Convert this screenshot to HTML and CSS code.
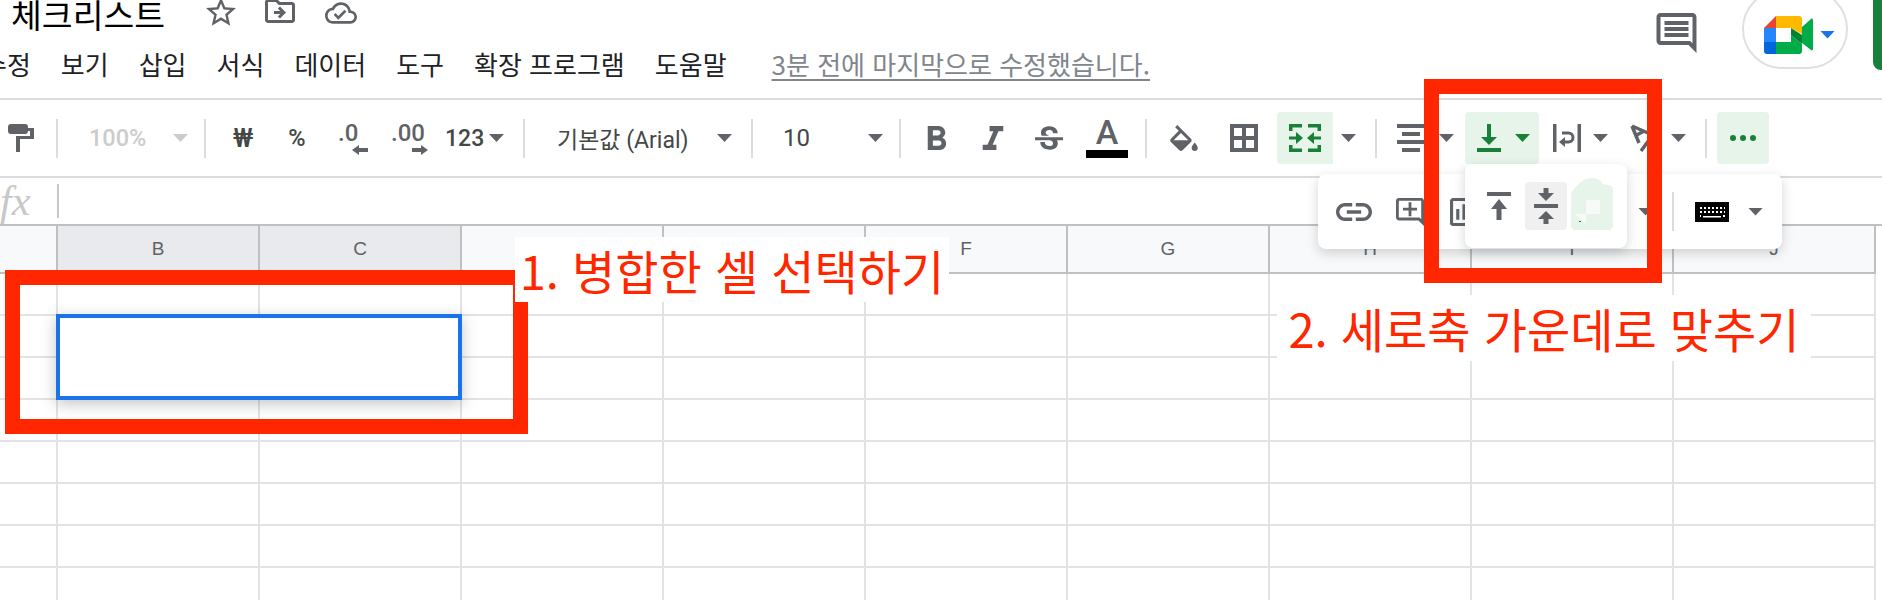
FILE: index.html
```html
<!DOCTYPE html>
<html lang="ko">
<head>
<meta charset="UTF-8">
<title>체크리스트</title>
<link rel="stylesheet" href="styles.css">
</head>
<body>

<!-- title and menu -->
<header class="top">
    <div class="top-left">
        <div class="title-row">
            <h1 class="doc-title">체크리스트</h1>
            <svg class="ico star" viewBox="2 2 20 19"><path d="M22 9.24l-7.19-.62L12 2 9.19 8.63 2 9.24l5.46 4.73L5.82 21 12 17.27 18.18 21l-1.63-7.03L22 9.24zM12 15.4l-3.76 2.27 1-4.28-3.32-2.88 4.38-.38L12 6.1l1.71 4.04 4.38.38-3.32 2.88 1 4.28L12 15.4z"/></svg>
            <svg class="ico move" viewBox="2 4 20 16"><path d="M20 6h-8l-2-2H4c-1.1 0-1.99.9-1.99 2L2 18c0 1.1.9 2 2 2h16c1.1 0 2-.9 2-2V8c0-1.1-.9-2-2-2zm0 12H4V6h5.17l2 2H20v10zM12.16 12H8v2h4.16l-1.59 1.59L11.99 17 16 13l-4.01-4-1.42 1.41z"/></svg>
            <svg class="ico cloud" viewBox="0 4 24 16"><path d="M19.35 10.04C18.67 6.59 15.64 4 12 4 9.11 4 6.6 5.64 5.35 8.04 2.34 8.36 0 10.91 0 14c0 3.31 2.69 6 6 6h13c2.76 0 5-2.24 5-5 0-2.64-2.05-4.78-4.65-4.96zM19 18H6c-2.21 0-4-1.79-4-4 0-2.05 1.53-3.76 3.56-3.97l1.07-.11.5-.95C8.08 7.14 9.94 6 12 6c2.62 0 4.88 1.86 5.39 4.43l.3 1.5 1.53.11c1.56.1 2.78 1.41 2.78 2.96 0 1.65-1.35 3-3 3zm-9-3.82l-2.09-2.09L6.5 13.5 10 17l6.01-6.01-1.41-1.41z"/></svg>
        </div>
        <nav class="menu">
            <span>수정</span>
            <span>보기</span>
            <span>삽입</span>
            <span>서식</span>
            <span>데이터</span>
            <span>도구</span>
            <span>확장 프로그램</span>
            <span>도움말</span>
            <span class="last-edit">3분 전에 마지막으로 수정했습니다.</span>
        </nav>
    </div>
    <div class="top-right">
        <svg class="ico comments" viewBox="2 2 20 20"><path d="M21.99 4c0-1.1-.89-2-1.99-2H4c-1.1 0-2 .9-2 2v12c0 1.1.9 2 2 2h14l4 4-.01-18zM20 4v13.17L18.83 16H4V4h16zM6 12h12v2H6zm0-3h12v2H6zm0-3h12v2H6z"/></svg>
        <div class="meet-pill">
            <svg class="meet-logo" viewBox="0 0 49 38">
                <path fill="#ea4335" d="M0 12L12 0v12z"/>
                <path fill="#ffba00" d="M12 0h23c2 0 3 1 3 3v15l-11-6V12H12z"/>
                <path fill="#2684fc" d="M0 12h12v14H0z"/>
                <path fill="#0066da" d="M0 26h12v12H3c-2 0-3-1-3-3z"/>
                <path fill="#00ac47" d="M12 26h15v-7l11 9v7c0 2-1 3-3 3H12z"/>
                <path fill="#00832d" d="M27 12l11 7v9l-11-9z"/>
                <path fill="#00ac47" d="M38 11l9-8c1-1 2 0 2 1v29c0 1-1 2-2 1l-9-7z"/>
            </svg>
            <span class="caret caret-blue"></span>
        </div>
        <div class="share-edge"></div>
    </div>
</header>

<!-- main toolbar -->
<div class="toolbar">
    <svg class="ico ml-8 w26" viewBox="0 0 26 28"><path d="M0 3a3 3 0 0 1 3-3h14a3 3 0 0 1 3 3v4a3 3 0 0 1-3 3H3a3 3 0 0 1-3-3zM20 4h6v11H12v13H8V12h14V7h-2z"/></svg>
    <span class="sep ml-22"></span>
    <span class="tb-text zoom-box ml-31">100%</span>
    <span class="caret caret-off ml-24"></span>
    <span class="sep ml-16"></span>
    <span class="tb-text tb-bold won ml-27">₩</span>
    <span class="tb-text tb-bold pct ml-35">%</span>
    <span class="decimal dec-less ml-32"><span>.0</span>
        <svg class="ico dec-arrow" viewBox="0 0 16 10"><path d="M16 3H7V0L0 5l7 5V7h9z"/></svg>
    </span>
    <span class="decimal dec-more ml-23"><span>.00</span>
        <svg class="ico dec-arrow" viewBox="0 0 16 10"><path d="M0 3h9V0l7 5-7 5V7H0z"/></svg>
    </span>
    <span class="tb-text tb-bold num-fmt ml-17">123</span>
    <span class="caret ml-5"></span>
    <span class="sep ml-19"></span>
    <span class="tb-text font-name ml-32">기본값 (Arial)</span>
    <span class="caret ml-27"></span>
    <span class="sep ml-19"></span>
    <span class="tb-text font-size ml-30">10</span>
    <span class="caret ml-58"></span>
    <span class="sep ml-16"></span>
    <svg class="ico ml-26 glyph-b" viewBox="7 4 10.800 14"><path d="M15.600 10.790c.97-.67 1.650-1.770 1.650-2.790 0-2.260-1.750-4-4-4H7v14h7.040c2.090 0 3.710-1.700 3.710-3.790 0-1.520-.86-2.820-2.150-3.420zM10 6.500h3c.83 0 1.500.67 1.500 1.500s-.67 1.500-1.500 1.500h-3v-3zm3.500 9H10v-3h3.500c.83 0 1.500.67 1.500 1.500s-.67 1.500-1.500 1.500z"/></svg>
    <svg class="ico ml-34 glyph-i" viewBox="6 4 12 14"><path d="M10 4v3h2.210l-3.420 8H6v3h8v-3h-2.210l3.420-8H18V4z"/></svg>
    <svg class="ico ml-30 glyph-s" viewBox="3 3 18 15"><path d="M6.850 7.080C6.850 4.370 9.450 3 12.240 3c1.640 0 3 .49 3.900 1.280.77.65 1.460 1.730 1.460 3.240h-3.010c0-.31-.05-.59-.15-.85-.29-.86-1.200-1.280-2.250-1.280-1.860 0-2.340 1.020-2.340 1.700 0 .48.25.88.74 1.210.38.25.77.48 1.410.7H7.390c-.21-.34-.54-.89-.54-1.920zM21 12v-2H3v2h9.620c1.150.45 1.960.75 1.960 1.970 0 1-.81 1.670-2.280 1.670-1.540 0-2.930-.54-2.930-2.510H6.400c0 .55.08 1.130.24 1.580.81 2.290 3.290 3.300 5.670 3.300 2.270 0 5.300-.89 5.300-4.050 0-.3-.01-1.160-.48-1.940H21V12z"/></svg>
    <span class="text-color ml-23"><span class="text-color-a">A</span><span class="text-color-bar"></span></span>
    <span class="sep ml-17"></span>
    <svg class="ico ml-23 bucket" viewBox="3 0 18 17"><path d="M16.560 8.940L7.620 0 6.210 1.410l2.380 2.380-5.150 5.150c-.59.59-.59 1.540 0 2.120l5.500 5.500c.29.29.68.44 1.060.44s.77-.15 1.060-.44l5.500-5.500c.59-.58.59-1.530 0-2.120zM5.210 10L10 5.210 14.790 10H5.210zM19 11.500s-2 2.170-2 3.500c0 1.100.9 2 2 2s2-.9 2-2c0-1.330-2-3.500-2-3.500z"/></svg>
    <svg class="ico ml-32 borders" viewBox="0 0 28 28"><path fill-rule="evenodd" d="M0 0h28v28H0zM4 4v8h8V4zM16 4v8h8V4zM4 16v8h8v-8zM16 16v8h8v-8z"/></svg>
    <span class="tb-on merge-btn ml-19">
        <svg class="ico-on merge-ico" viewBox="0 0 32 28"><path d="M0 0h13v3.500H3.500V7H0zM19 0h13v7h-3.500V3.500H19zM0 21h3.500v3.500H13V28H0zM28.500 21H32v7H19v-3.500h9.500zM0 12.500h7V8l7 6-7 6v-4.500H0zM32 12.500h-7V8l-7 6 7 6v-4.500h7z"/></svg>
    </span>
    <span class="caret ml-8"></span>
    <span class="sep ml-19"></span>
    <svg class="ico ml-20 w28" viewBox="0 0 28 28"><path d="M0 0h28v4H0zM5 8h18v4H5zM0 16h28v4H0zM5 24h18v4H5z"/></svg>
    <span class="caret ml-14"></span>
    <span class="tb-on valign-btn ml-11">
        <svg class="ico-on w24" viewBox="0 0 24 28"><path d="M10 0h4v13h6l-8 8-8-8h6zM0 24h24v4H0z"/></svg>
        <span class="caret caret-green"></span>
    </span>
    <svg class="ico ml-14 w28" viewBox="0 0 28 28"><path d="M0 0h3.500v28H0zM24.500 0H28v28h-3.500zM6 18l6-5v3.500h3.500a3 3 0 0 0 0-6H9V7.500h6.500a6 6 0 0 1 0 12H12V23z"/></svg>
    <span class="caret ml-12"></span>
    <svg class="ico-line ml-22 rotate" viewBox="0 0 19 28"><path d="M2 2l16 7M2 2l7 17M5 12l9-5M11 27l8-11"/></svg>
    <span class="caret ml-22"></span>
    <span class="sep ml-19"></span>
    <span class="tb-on more-btn ml-10">
        <svg class="ico-on more-ico" viewBox="0 0 26 6"><circle cx="3" cy="3" r="3"/><circle cx="13" cy="3" r="3"/><circle cx="23" cy="3" r="3"/></svg>
    </span>
</div>

<div class="formula-bar">
    <span class="fx">fx</span>
    <span class="fx-sep"></span>
</div>

<!-- sheet -->
<table class="sheet">
    <colgroup>
        <col class="col-head"><col class="col"><col class="col"><col class="col"><col class="col"><col class="col"><col class="col"><col class="col"><col class="col"><col class="col">
    </colgroup>
    <thead>
        <tr>
            <th></th>
            <th class="picked">B</th>
            <th class="picked">C</th>
            <th>D</th>
            <th>E</th>
            <th>F</th>
            <th>G</th>
            <th>H</th>
            <th>I</th>
            <th>J</th>
        </tr>
    </thead>
    <tbody>
        <tr><td></td><td></td><td></td><td></td><td></td><td></td><td></td><td></td><td></td><td></td></tr>
        <tr><td></td><td></td><td></td><td></td><td></td><td></td><td></td><td></td><td></td><td></td></tr>
        <tr><td></td><td></td><td></td><td></td><td></td><td></td><td></td><td></td><td></td><td></td></tr>
        <tr><td></td><td></td><td></td><td></td><td></td><td></td><td></td><td></td><td></td><td></td></tr>
        <tr><td></td><td></td><td></td><td></td><td></td><td></td><td></td><td></td><td></td><td></td></tr>
        <tr><td></td><td></td><td></td><td></td><td></td><td></td><td></td><td></td><td></td><td></td></tr>
        <tr><td></td><td></td><td></td><td></td><td></td><td></td><td></td><td></td><td></td><td></td></tr>
        <tr><td></td><td></td><td></td><td></td><td></td><td></td><td></td><td></td><td></td><td></td></tr>
    </tbody>
</table>

<div class="selected-cell"></div>

<!-- overflow toolbar opened from the "more" button -->
<div class="float-bar">
    <svg class="ico ml-18 link-ico" viewBox="2 7 20 10"><path d="M3.900 12c0-1.710 1.390-3.100 3.100-3.100h4V7H7c-2.760 0-5 2.240-5 5s2.240 5 5 5h4v-1.900H7c-1.710 0-3.100-1.390-3.100-3.100zM8 13h8v-2H8v2zm9-6h-4v1.900h4c1.710 0 3.100 1.390 3.100 3.100s-1.390 3.100-3.100 3.100h-4V17h4c2.760 0 5-2.240 5-5s-2.240-5-5-5z"/></svg>
    <svg class="ico ml-24 w28" viewBox="2 2 20 20"><path d="M22 4c0-1.100-.9-2-2-2H4c-1.100 0-2 .9-2 2v12c0 1.100.9 2 2 2h14l4 4V4zm-2 13.170L18.830 16H4V4h16v13.170zM13 5h-2v4H7v2h4v4h2v-4h4V9h-4z"/></svg>
    <svg class="ico ml-26 w28" viewBox="3 3 18 18"><path d="M19 3H5c-1.100 0-2 .9-2 2v14c0 1.100.9 2 2 2h14c1.100 0 2-.9 2-2V5c0-1.100-.9-2-2-2zm0 16H5V5h14v14zM7 10h2v7H7zm4-3h2v10h-2zm4 6h2v4h-2z"/></svg>
    <span class="caret ml-160"></span>
    <span class="sep ml-19"></span>
    <svg class="keyboard ml-21" viewBox="0 0 34 20">
        <rect width="34" height="20"/>
        <path fill="#fff" d="M5 5h2v2H5zM9 5h2v2H9zM13 5h2v2h-2zM17 5h2v2h-2zM21 5h2v2h-2zM25 5h2v2h-2zM29 5h1v2h-1zM5 9h2v2H5zM9 9h2v2H9zM13 9h2v2h-2zM17 9h2v2h-2zM21 9h2v2h-2zM25 9h2v2h-2zM29 9h1v2h-1zM5 13h1v2H5zM8 14h18v1.500H8zM28 13h2v2h-2z"/>
    </svg>
    <span class="caret ml-19"></span>
</div>

<div class="align-pop">
    <svg class="ico w24" viewBox="0 0 24 28"><path d="M0 0h24v4H0zM12 7l8 10h-5.500v11h-5V17H4z"/></svg>
    <span class="align-btn">
        <svg class="ico center-ico" viewBox="0 0 24 36"><path d="M9.500 0h5v5H20l-8 8-8-8h5.500zM0 16h24v4H0zM12 23l8 8h-5.500v5h-5v-5H4z"/></svg>
    </span>
    <svg class="align-blob" viewBox="0 0 42 52">
        <path fill="#e6f4ea" d="M0 14l10-10c8-6 18-5 22 2l5 1c3 0 5 2 5 5v35c0 3-2 5-5 5H5c-3 0-5-2-5-5z"/>
        <path fill="#f6fbf8" d="M15 22h14v14H15zM4 36h11v10z"/>
        <path fill="#188038" d="M8 43h2v1H8z"/>
    </svg>
</div>

<!-- red annotations drawn over the screenshot -->
<div class="mark mark-cell"></div>
<div class="mark mark-tool"></div>
<div class="note note-cell">1. 병합한 셀 선택하기</div>
<div class="note note-tool">2. 세로축 가운데로 맞추기</div>

</body>
</html>
```

FILE: styles.css
```css
body {
    font-family: "Noto Sans CJK KR", "Noto Sans", sans-serif;
    margin: 0;
    padding: 0;
    width: 1882px;
    height: 600px;
    overflow: hidden;
    position: relative;
    background-color: #fff;
    color: #202124;
}

.ico { fill: #5f6368; flex: none; display: block; }
.ico-on { fill: #188038; flex: none; display: block; }
.ico-line { fill: none; stroke: #5f6368; stroke-width: 3.5; flex: none; display: block; }
.w24 { width: 24px; height: 28px; }
.w26 { width: 26px; height: 28px; }
.w28 { width: 28px; height: 28px; }

.ml-5 { margin-left: 5px; }
.ml-8 { margin-left: 8px; }
.ml-10 { margin-left: 10px; }
.ml-11 { margin-left: 11px; }
.ml-12 { margin-left: 12px; }
.ml-14 { margin-left: 14px; }
.ml-16 { margin-left: 16px; }
.ml-17 { margin-left: 17px; }
.ml-18 { margin-left: 18px; }
.ml-19 { margin-left: 19px; }
.ml-20 { margin-left: 20px; }
.ml-21 { margin-left: 21px; }
.ml-22 { margin-left: 22px; }
.ml-23 { margin-left: 23px; }
.ml-24 { margin-left: 24px; }
.ml-26 { margin-left: 26px; }
.ml-27 { margin-left: 27px; }
.ml-30 { margin-left: 30px; }
.ml-31 { margin-left: 31px; }
.ml-32 { margin-left: 32px; }
.ml-34 { margin-left: 34px; }
.ml-35 { margin-left: 35px; }
.ml-58 { margin-left: 58px; }
.ml-160 { margin-left: 160px; }

.caret {
    flex: none;
    width: 15px;
    height: 8px;
    background: #5f6368;
    clip-path: polygon(0 0, 100% 0, 50% 100%);
}

.caret-off { background: #ccc; }
.caret-green { background: #188038; margin-left: 14px; }
.caret-blue { background: #1a73e8; margin-left: 7px; }

.sep {
    flex: none;
    width: 2px;
    height: 39px;
    background: #dadce0;
}

/* top */
.top {
    height: 98px;
    border-bottom: 2px solid #dadce0;
    display: flex;
    justify-content: space-between;
}

.title-row {
    height: 35px;
    display: flex;
    align-items: flex-start;
}

.doc-title {
    margin: -8px 0 0 11px;
    font-size: 33.5px;
    font-weight: 400;
    line-height: 44px;
    color: #000;
}

.star { width: 30px; height: 29px; margin: -3px 0 0 41px; }
.move { width: 30px; height: 24px; margin: -1px 0 0 29px; }
.cloud { width: 32px; height: 22px; margin: 2px 0 0 30px; }

.menu {
    display: flex;
    gap: 30px;
    margin: 11px 0 0 -17px;
    font-size: 26px;
    line-height: 36px;
    color: #202124;
    white-space: nowrap;
}

.last-edit {
    margin-left: 15px;
    color: #80868b;
    text-decoration: underline;
    text-underline-offset: 4px;
}

.top-right {
    display: flex;
    align-items: flex-start;
}

.comments { width: 41px; height: 40px; margin: 13px 45px 0 0; }

.meet-pill {
    width: 106px;
    height: 80px;
    margin-top: -11px;
    box-sizing: border-box;
    border: 2px solid #e0e0e0;
    border-radius: 40px;
    display: flex;
    align-items: center;
    padding: 11px 0 0 20px;
}

.meet-logo { width: 49px; height: 38px; flex: none; }

.share-edge {
    width: 9px;
    height: 70px;
    margin-left: 25px;
    background: #188038;
    border-bottom-left-radius: 8px;
}

/* toolbar */
.toolbar {
    height: 76px;
    border-bottom: 2px solid #dadce0;
    display: flex;
    align-items: center;
    white-space: nowrap;
}

.tb-text {
    flex: none;
    font-family: Roboto, "Noto Sans CJK KR", sans-serif;
    font-size: 24px;
    color: #444746;
}

.tb-bold { font-weight: 500; text-align: center; }
.zoom-box { width: 60px; font-size: 23.5px; font-weight: 500; color: #ccc; }
.won { width: 20px; font-size: 26px; }
.pct { width: 18px; font-size: 23.5px; }
.num-fmt { width: 39px; font-size: 23px; }
.font-name { width: 133px; font-size: 23px; }
.font-size { width: 27px; }

.decimal {
    flex: none;
    display: flex;
    flex-direction: column;
    font-family: Roboto, sans-serif;
    font-size: 24px;
    font-weight: 500;
    line-height: 24px;
    color: #5f6368;
    height: 34px;
}

.decimal span { display: block; }
.dec-less { width: 30px; }
.dec-more { width: 37px; }
.dec-arrow { width: 16px; height: 10px; align-self: flex-end; }

.glyph-b { width: 20px; height: 24px; }
.glyph-i { width: 24px; height: 24px; }
.glyph-s { width: 28px; height: 24px; }

.text-color {
    flex: none;
    width: 42px;
    height: 40px;
    display: flex;
    flex-direction: column;
    align-items: center;
    justify-content: space-between;
}

.text-color-a {
    font-family: Roboto, sans-serif;
    font-size: 34px;
    font-weight: 500;
    line-height: 28px;
    color: #5f6368;
}

.text-color-bar {
    width: 42px;
    height: 8px;
    background: #000;
}

.bucket { width: 28px; height: 26px; }
.borders { width: 28px; height: 28px; }

.tb-on {
    flex: none;
    height: 52px;
    background: #e6f4ea;
    display: flex;
    align-items: center;
}

.merge-btn {
    width: 56px;
    justify-content: center;
    border-radius: 4px 0 0 4px;
}

.merge-ico { width: 32px; height: 28px; }

.valign-btn {
    width: 74px;
    box-sizing: border-box;
    padding-left: 12px;
    border-radius: 4px;
}

.more-btn {
    width: 52px;
    justify-content: center;
    border-radius: 4px;
}

.more-ico { width: 26px; height: 6px; }
.rotate { width: 19px; height: 28px; }

/* formula bar */
.formula-bar {
    height: 46px;
    border-bottom: 2px solid #c0c0c0;
    display: flex;
    align-items: center;
}

.fx {
    font-family: "Liberation Serif", serif;
    font-style: italic;
    font-size: 42px;
    line-height: 40px;
    color: #c8c8c8;
    width: 57px;
    box-sizing: border-box;
}

.fx-sep {
    width: 2px;
    height: 34px;
    background: #c8c8c8;
}

/* sheet */
.sheet {
    table-layout: fixed;
    border-collapse: separate;
    border-spacing: 0;
    width: 1876px;
}

.col-head { width: 58px; }
.col { width: 202px; }

.sheet th, .sheet td {
    box-sizing: border-box;
    padding: 0;
}

.sheet th {
    height: 48px;
    background-color: #f8f9fa;
    border-right: 2px solid #c0c0c0;
    border-bottom: 2px solid #c0c0c0;
    font-family: "Liberation Sans", Arial, sans-serif;
    font-size: 19px;
    font-weight: 400;
    color: #5f6368;
}

.sheet th.picked { background-color: #e8eaed; }

.sheet td {
    height: 42px;
    border-right: 2px solid #e2e3e3;
    border-bottom: 2px solid #e2e3e3;
}

.selected-cell {
    position: absolute;
    left: 56px;
    top: 314px;
    width: 406px;
    height: 86px;
    box-sizing: border-box;
    border: 4px solid #1a73e8;
    background: #fff;
    box-shadow: 0 4px 14px rgba(60,64,67,0.3);
}

/* floating toolbars */
.float-bar {
    position: absolute;
    left: 1318px;
    top: 174px;
    width: 464px;
    height: 75px;
    background: #fff;
    border-radius: 8px;
    box-shadow: 0 4px 12px rgba(60,64,67,0.22);
    display: flex;
    align-items: center;
}

.link-ico { width: 36px; height: 18px; }
.keyboard { width: 34px; height: 20px; flex: none; }

.align-pop {
    position: absolute;
    left: 1465px;
    top: 164px;
    width: 162px;
    height: 84px;
    background: #fff;
    border-radius: 8px;
    box-shadow: 0 4px 12px rgba(60,64,67,0.22);
    display: flex;
    align-items: center;
    box-sizing: border-box;
    padding-left: 22px;
}

.align-btn {
    width: 42px;
    height: 48px;
    margin-left: 14px;
    background: #f0f0f0;
    border-radius: 4px;
    display: flex;
    align-items: center;
    justify-content: center;
}

.center-ico { width: 24px; height: 36px; }

.align-blob {
    width: 42px;
    height: 52px;
    margin: -4px 0 0 4px;
    flex: none;
}

/* annotations */
.mark {
    position: absolute;
    box-sizing: border-box;
    border: 15px solid #ff2600;
}

.mark-cell { left: 5px; top: 270px; width: 523px; height: 164px; }
.mark-tool { left: 1424px; top: 79px; width: 238px; height: 204px; }

.note {
    position: absolute;
    background: #fff;
    color: #ff2600;
    font-size: 47px;
    font-weight: 400;
    text-align: center;
    white-space: nowrap;
}

.note-cell { left: 515px; top: 237px; width: 434px; height: 65px; line-height: 65px; }
.note-tool { left: 1277px; top: 295px; width: 534px; height: 66px; line-height: 66px; }
```
